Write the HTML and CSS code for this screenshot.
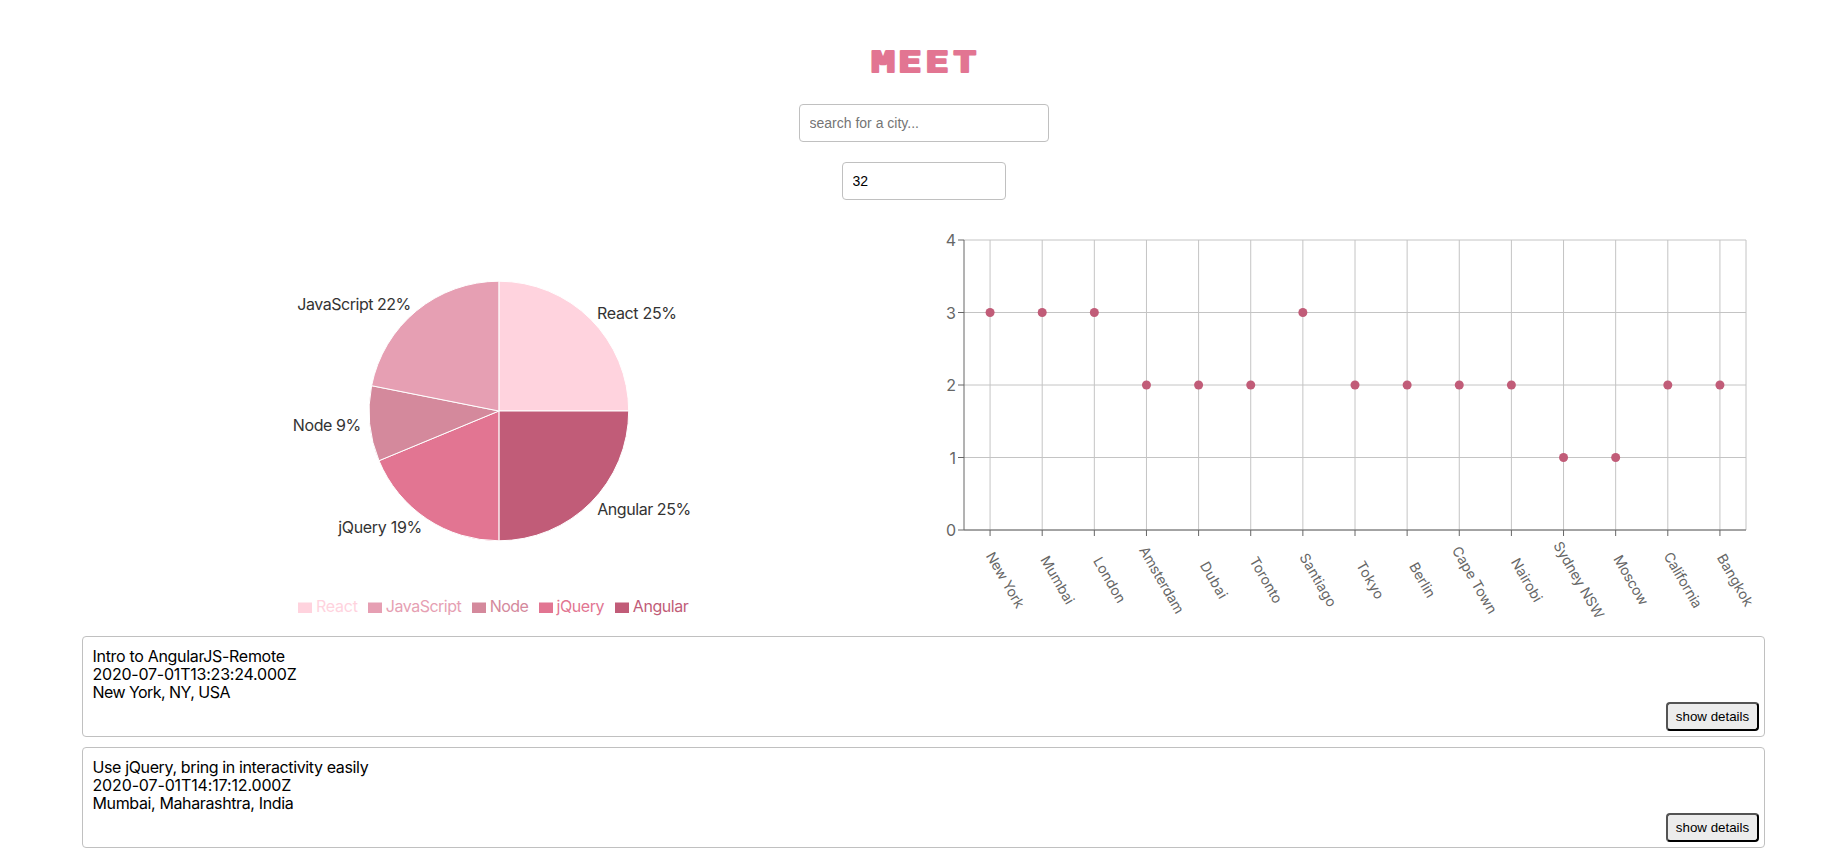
FILE: index.html
```
<!DOCTYPE html>
<html lang="en">
<head>
<meta charset="utf-8">
<title>Meet</title>
<link rel="stylesheet" href="styles.css">
</head>
<body>
<main class="app">
  <h1 class="brand"><svg class="brand-mark" width="112" height="30" viewBox="0 0 112 30"><text class="brand-text" transform="scale(1.38 1)" x="10.9 30.4 50.1 70.1" y="25.2">MEET</text></svg></h1>
  <input class="field city" type="text" placeholder="search for a city...">
  <input class="field count" type="text" value="32">
  <section class="charts">
    <svg class="chart" viewBox="82 220 842 416">
      <g class="slices">
        <path class="react" d="M498.9 411V281.2A129.8 129.8 0 0 1 628.7 411Z"/>
        <path class="angular" d="M498.9 411H628.7A129.8 129.8 0 0 1 498.9 540.8Z"/>
        <path class="jquery" d="M498.9 411V540.8A129.8 129.8 0 0 1 379 460.7Z"/>
        <path class="node" d="M498.9 411L379 460.7A129.8 129.8 0 0 1 371.6 385.7Z"/>
        <path class="javascript" d="M498.9 411L371.6 385.7A129.8 129.8 0 0 1 498.9 281.2Z"/>
      </g>
      <g class="pie-labels">
        <text x="297.3" y="310.2" textLength="114">JavaScript 22%</text>
        <text x="597" y="319.3" textLength="80">React 25%</text>
        <text x="292.8" y="431.2" textLength="68.5">Node 9%</text>
        <text x="338.2" y="533.3" textLength="84">jQuery 19%</text>
        <text x="597.2" y="515.2" textLength="94">Angular 25%</text>
      </g>
      <g class="legend">
        <g class="react"><rect x="298" y="602.5" width="14" height="10.5"/><text x="316" y="612" textLength="42">React</text></g>
        <g class="javascript"><rect x="368" y="602.5" width="14" height="10.5"/><text x="385.8" y="612" textLength="76">JavaScript</text></g>
        <g class="node"><rect x="472" y="602.5" width="14" height="10.5"/><text x="489.8" y="612" textLength="39">Node</text></g>
        <g class="jquery"><rect x="539" y="602.5" width="14" height="10.5"/><text x="556.6" y="612" textLength="48">jQuery</text></g>
        <g class="angular"><rect x="615" y="602.5" width="14" height="10.5"/><text x="632.8" y="612" textLength="56">Angular</text></g>
      </g>
    </svg>
    <svg class="chart" id="scatter" viewBox="924 220 841 416"></svg>
  </section>
  <article class="event">
    <p class="line first">Intro to AngularJS-Remote</p>
    <p class="line stamp">2020-07-01T13:23:24.000Z</p>
    <p class="line state">New York, NY, USA</p>
    <button class="details">show details</button>
  </article>
  <article class="event">
    <p class="line">Use jQuery, bring in interactivity easily</p>
    <p class="line stamp late">2020-07-01T14:17:12.000Z</p>
    <p class="line">Mumbai, Maharashtra, India</p>
    <button class="details">show details</button>
  </article>
</main>
<script src="chart.js"></script>
</body>
</html>
```
FILE: styles.css
```
body { margin: 0; background: #fff; color: #000; font-family: Inter, sans-serif; overflow: hidden; }
.app { display: flex; flex-direction: column; align-items: center; width: 1683px; margin-left: 82px; padding-top: 47px; }
.brand { margin: 0; height: 30px; line-height: 0; }
.brand-mark { overflow: visible; }
.brand-text { font: bold 28.5px "DejaVu Sans Mono", monospace; text-anchor: middle; fill: #e27592; stroke: #e27592; stroke-width: 2; stroke-linejoin: round; }
.field { box-sizing: border-box; height: 38px; border: 1px solid #c0c0c0; border-radius: 4px; padding: 0 10px; font-family: "Liberation Sans", Arial, sans-serif; outline: 0; }
.city { width: 250px; margin-top: 27px; font-size: 14px; }
.city::placeholder { color: #757575; }
.count { width: 164px; margin-top: 20px; font-size: 14px; }
.charts { display: grid; grid-template-columns: 842px 841px; height: 416px; margin-top: 20px; }
.chart { display: block; width: 100%; height: 416px; overflow: visible; }
.slices path { stroke: #fff; stroke-width: 1; }
.react { fill: #ffd3de; }
.javascript { fill: #e69fb3; }
.node { fill: #d4899c; }
.jquery { fill: #e27592; }
.angular { fill: #c15c78; }
.pie-labels { font-size: 16px; fill: #333; }
.legend { font-size: 16px; }
.grid { stroke: #c4c4c4; fill: none; }
.axis { stroke: #666; fill: none; }
.point { fill: #c15c78; }
.value-label { font-size: 16px; fill: #666; text-anchor: end; }
.city-label { font-size: 14px; fill: #666; text-anchor: middle; }
.event { position: relative; box-sizing: border-box; width: 100%; height: 101px; margin-bottom: 10px; padding: 10px; border: 1px solid #c0c0c0; border-radius: 4px; }
.line { margin: 0 0 0 -0.5px; font-size: 16px; line-height: 18px; letter-spacing: -0.37px; }
.first { letter-spacing: -0.31px; }
.stamp { letter-spacing: -0.22px; }
.late { letter-spacing: -0.14px; }
.state { letter-spacing: -0.55px; }
.details { position: absolute; right: 5px; bottom: 5px; box-sizing: border-box; width: 93px; height: 29px; padding: 0; border: 2px outset #000; border-radius: 4px; background: #ececec; color: #000; font: 13.33px "Liberation Sans", Arial, sans-serif; }
```
FILE: chart.js
```
const cities = [
  ["New York", 3, 62], ["Mumbai", 3, 53], ["London", 3, 50], ["Amsterdam", 2, 75],
  ["Dubai", 2, 40], ["Toronto", 2, 51], ["Santiago", 3, 59], ["Tokyo", 2, 41],
  ["Berlin", 2, 38], ["Cape Town", 2, 75], ["Nairobi", 2, 48], ["Sydney NSW", 1, 86],
  ["Moscow", 1, 55], ["California", 2, 62], ["Bangkok", 2, 58]
];
const left = 964, right = 1746, top_ = 240, bottom = 530;
const step = (right - left) / cities.length;
const cx = i => left + step * (i + 0.5);
const cy = v => bottom - v * 72.5;
let grid = "", axis = `<path d="M${left} ${top_}V${bottom}H${right}"/>`, labels = "", points = "";
for (let v = 0; v <= 4; v++) {
  grid += `<path d="M${left} ${cy(v)}H${right}"/>`;
  axis += `<path d="M${left - 6} ${cy(v)}H${left}"/>`;
  labels += `<text class="value-label" x="956" y="${cy(v) + 6}">${v}</text>`;
}
cities.forEach(([name, v, len], i) => {
  const x = cx(i);
  grid += `<path d="M${x} ${top_}V${bottom}"/>`;
  axis += `<path d="M${x} ${bottom}v6"/>`;
  labels += `<text class="city-label" transform="translate(${x + 11} 582.5) rotate(60)" textLength="${len}">${name}</text>`;
  points += `<circle class="point" cx="${x}" cy="${cy(v)}" r="4.5"/>`;
});
grid += `<path d="M${right} ${top_}V${bottom}"/>`;
document.getElementById("scatter").innerHTML =
  `<g class="grid">${grid}</g><g class="axis">${axis}</g>${labels}${points}`;
```
